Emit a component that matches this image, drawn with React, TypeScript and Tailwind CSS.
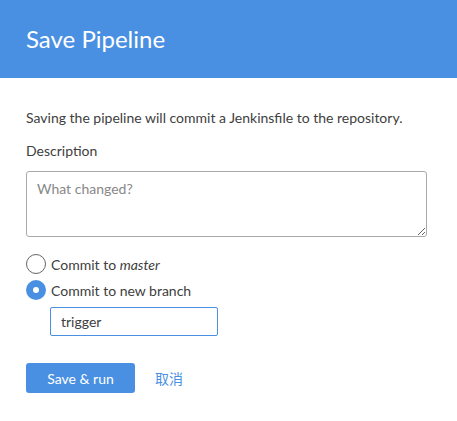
import { useState } from 'react';

export default function App() {
    const [branch, setBranch] = useState<'master' | 'new'>('new');

    return (
        <div className="h-[421px] w-[457px] bg-white font-['Lato',sans-serif] text-[14px] text-[#404040]">
            {/* Header */}
            <div className="flex h-[78px] items-center bg-[#4a90e2] px-[26px]">
                <h2 className="text-[24px] font-normal text-white">Save Pipeline</h2>
            </div>

            <div className="px-[26px] pt-[30px]">
                <p className="leading-[20px]">Saving the pipeline will commit a Jenkinsfile to the repository.</p>

                <label className="mt-[13px] block leading-[20px]">Description</label>
                <textarea
                    placeholder="What changed?"
                    className="mt-[10px] block h-[66px] w-[401px] rounded-[3px] border border-[#aaaaaa] px-[10px] py-[6px] text-[14px] placeholder:text-[#888888] focus:outline-none"
                />

                <div className="mt-[17px] flex flex-col gap-[6px]">
                    <label className="flex h-[20px] items-center gap-[5px]" onClick={() => setBranch('master')}>
                        <span className={`flex h-[20px] w-[20px] items-center justify-center rounded-full ${branch === 'master' ? 'bg-[#4a90e2]' : 'border-[1.5px] border-[#666666] bg-white'}`}>
                            {branch === 'master' && <span className="h-[6px] w-[6px] rounded-full bg-white" />}
                        </span>
                        <span>Commit to <em>master</em></span>
                    </label>
                    <label className="flex h-[20px] items-center gap-[5px]" onClick={() => setBranch('new')}>
                        <span className={`flex h-[20px] w-[20px] items-center justify-center rounded-full ${branch === 'new' ? 'bg-[#4a90e2]' : 'border-[1.5px] border-[#666666] bg-white'}`}>
                            {branch === 'new' && <span className="h-[6px] w-[6px] rounded-full bg-white" />}
                        </span>
                        <span>Commit to new branch</span>
                    </label>
                </div>

                <input
                    defaultValue="trigger"
                    className="ml-[24px] mt-[7px] block h-[29px] w-[168px] rounded-[2px] border border-[#4a90e2] px-[10px] text-[14px] text-[#404040] focus:outline-none"
                />

                <div className="mt-[27px] flex items-center gap-[20px]">
                    <button className="h-[30px] w-[109px] rounded-[3px] bg-[#4a90e2] text-[14px] text-white">Save &amp; run</button>
                    <button className="font-['Lato','Noto_Sans_CJK_SC',sans-serif] text-[14px] text-[#4a90e2]">取消</button>
                </div>
            </div>
        </div>
    );
}
